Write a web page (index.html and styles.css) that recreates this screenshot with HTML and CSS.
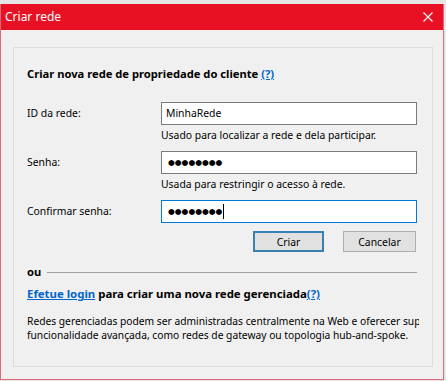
FILE: index.html
```html
<!DOCTYPE html>
<html lang="pt">
<head>
  <meta charset="UTF-8" />
  <title>Criar rede</title>
  <link rel="stylesheet" href="styles.css">
</head>
<body>

  <div class="window">
    <!-- Title bar -->
    <div class="titlebar">
      <span class="title">Criar rede</span>
      <svg class="close" width="10" height="10" viewBox="0 0 10 10">
        <path d="M0.5 0.5 L9.5 9.5 M9.5 0.5 L0.5 9.5" stroke="#fff" stroke-width="1.1" fill="none"/>
      </svg>
    </div>

    <div class="content">
      <div class="panel">
        <div class="heading">Criar nova rede de propriedade do cliente <a href="#">(?)</a></div>

        <div class="field">
          <label>ID da rede:</label>
          <div class="control">
            <div class="input">MinhaRede</div>
            <div class="hint">Usado para localizar a rede e dela participar.</div>
          </div>
        </div>

        <div class="field">
          <label>Senha:</label>
          <div class="control">
            <div class="input dots">●●●●●●●●</div>
            <div class="hint">Usada para restringir o acesso à rede.</div>
          </div>
        </div>

        <div class="field">
          <label>Confirmar senha:</label>
          <div class="control">
            <div class="input dots focused">●●●●●●●●<span class="caret"></span></div>
          </div>
        </div>

        <div class="buttons">
          <button class="btn default">Criar</button>
          <button class="btn">Cancelar</button>
        </div>

        <div class="divider">
          <span>ou</span>
          <hr>
        </div>

        <div class="login"><a href="#">Efetue login</a> para criar uma nova rede gerenciada<a href="#">(?)</a></div>

        <div class="info">
          <div>Redes gerenciadas podem ser administradas centralmente na Web e oferecer suporte a</div>
          <div>funcionalidade avançada, como redes de gateway ou topologia hub-and-spoke.</div>
        </div>
      </div>
    </div>
  </div>

</body>
</html>
```

FILE: styles.css
```css
:root {
  --red: #e81123;
  --bg: #f0f0f0;
  --text: #000;
  --link: #0066cc;
}

* {
  box-sizing: border-box;
}

body {
  margin: 0;
  background-color: #e6e6e6;
  font-family: 'Noto Sans', 'Open Sans', sans-serif;
  font-size: 10.4px;
  line-height: 16px;
  color: var(--text);
}

.window {
  margin-top: 4px;
  width: 444px;
  height: 376px;
  background-color: var(--bg);
  border: 1px solid #e06b78;
  border-top: none;
}

.titlebar {
  display: flex;
  justify-content: space-between;
  align-items: center;
  height: 26px;
  padding: 0 10px 0 4px;
  background-color: var(--red);
  color: white;
}

.title {
  font-size: 12px;
}

.content {
  padding: 17px 10px 11px 12px;
}

.panel {
  height: 320px;
  border: 1px solid #dcdcdc;
  padding: 18px 13px 0 13px;
  overflow: hidden;
}

.heading {
  font-size: 11.2px;
  font-weight: bold;
  margin-bottom: 20px;
}

a {
  color: var(--link);
}

.field {
  display: flex;
  align-items: flex-start;
  margin-bottom: 8px;
}

.field label {
  width: 134px;
  line-height: 23px;
}

.control {
  display: flex;
  flex-direction: column;
}

.input {
  width: 256px;
  height: 23px;
  line-height: 21px;
  padding: 0 4px;
  background: white;
  border: 1px solid #7a7a7a;
}

.dots {
  padding-left: 6px;
  font-family: 'DejaVu Sans', sans-serif;
  font-size: 7.8px;
  letter-spacing: 0;
}

.focused {
  border-color: #0078d7;
}

.caret {
  display: inline-block;
  width: 1px;
  height: 15px;
  margin-left: 1px;
  background: black;
  vertical-align: middle;
}

.hint {
  margin-top: 2px;
  line-height: 16px;
}

.buttons {
  display: flex;
  justify-content: flex-end;
  gap: 19px;
  padding-right: 3px;
  margin-top: 1px;
}

.btn {
  width: 73px;
  height: 21px;
  font-family: inherit;
  font-size: 10.4px;
  background: #e1e1e1;
  border: 1px solid #adadad;
}

.btn.default {
  width: 71px;
  border: 2px solid #3c7fb1;
}

.divider {
  display: flex;
  align-items: center;
  gap: 6px;
  margin-top: 12px;
  padding-right: 2px;
  font-size: 11.2px;
  font-weight: bold;
}

.divider hr {
  flex: 1;
  border: none;
  border-top: 1px solid #a0a0a0;
  margin: 0;
}

.login {
  font-size: 11.4px;
  font-weight: bold;
  margin-top: 6px;
}

.info {
  margin-top: 12px;
  width: 392px;
  font-size: 10.25px;
  white-space: nowrap;
  overflow: hidden;
  line-height: 14px;
}
```
